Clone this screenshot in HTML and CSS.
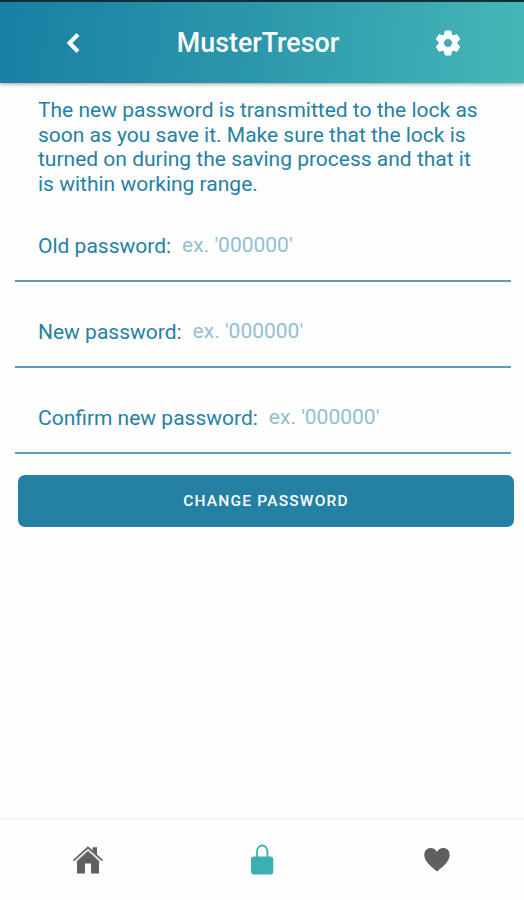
FILE: index.html
```html
<!DOCTYPE html>
<html lang="en">
  <head>
    <meta charset="UTF-8" />
    <meta name="viewport" content="width=device-width, initial-scale=1.0" />
    <title>MusterTresor</title>
    <link rel="stylesheet" href="styles.css">
  </head>
  <body>
    <header class="header">
      <button type="button" class="icon-button" aria-label="Back">
        <svg width="30" height="30" viewBox="0 0 30 30">
          <path d="M20 6.500 L11.500 15 L20 23.500" fill="none" stroke="#fff" stroke-width="4" />
        </svg>
      </button>
      <h1>MusterTresor</h1>
      <button type="button" class="icon-button" aria-label="Settings">
        <svg width="30" height="30" viewBox="0 0 24 24">
          <path fill="#fff" stroke="#fff" stroke-width=".8" stroke-linejoin="round" d="M19.14 12.94c.04-.3.06-.61.06-.94 0-.32-.02-.64-.07-.94l2.03-1.58c.18-.14.23-.41.12-.61l-1.92-3.32c-.12-.22-.37-.29-.59-.22l-2.39.96c-.5-.38-1.03-.7-1.62-.94l-.36-2.54c-.04-.24-.24-.41-.48-.41h-3.84c-.24 0-.43.17-.47.41l-.36 2.54c-.59.24-1.13.57-1.62.94l-2.39-.96c-.22-.08-.47 0-.59.22L2.74 8.87c-.12.21-.08.47.12.61l2.03 1.58c-.05.3-.09.63-.09.94s.02.64.07.94l-2.03 1.58c-.18.14-.23.41-.12.61l1.92 3.32c.12.22.37.29.59.22l2.39-.96c.5.38 1.03.7 1.62.94l.36 2.54c.05.24.24.41.48.41h3.84c.24 0 .44-.17.47-.41l.36-2.54c.59-.24 1.13-.56 1.62-.94l2.39.96c.22.08.47 0 .59-.22l1.92-3.32c.12-.22.07-.47-.12-.61l-2.01-1.58zM12 15.600a3.600 3.600 0 1 1 0-7.200 3.600 3.600 0 0 1 0 7.200z" />
        </svg>
      </button>
    </header>

    <main class="content">
      <p class="info">
        The new password is transmitted to the lock as<br />
        soon as you save it. Make sure that the lock is<br />
        turned on during the saving process and that it<br />
        is within working range.
      </p>
      <form id="password-form">
        <div class="field">
          <label for="oldPassword">Old password:</label>
          <input type="text" id="oldPassword" name="oldPassword" placeholder="ex. '000000'" />
        </div>
        <div class="field">
          <label for="newPassword">New password:</label>
          <input type="text" id="newPassword" name="newPassword" placeholder="ex. '000000'" />
        </div>
        <div class="field">
          <label for="confirmPassword">Confirm new password:</label>
          <input type="text" id="confirmPassword" name="confirmPassword" placeholder="ex. '000000'" />
        </div>
        <button type="submit">CHANGE PASSWORD</button>
      </form>
    </main>

    <nav class="tabs">
      <a href="#" aria-label="Home">
        <svg width="32" height="32" viewBox="0 0 32 32">
          <path fill="#606060" d="M20.500 3.500h4.500v9l-4.500-4z" />
          <path fill="#606060" d="M5 16.500 L16 6.500 L27 16.500 V29.500 H19 V19.500 H13 V29.500 H5z" />
          <path d="M3 16.800 L16 4.800 L29 16.800" fill="none" stroke="#ddd" stroke-width="3.400" />
          <path d="M1.500 16.500 L16 3.400 L30.500 16.500" fill="none" stroke="#606060" stroke-width="1.600" />
          <path fill="#606060" d="M21 3.500h4v7l-4-3.700z" />
        </svg>
      </a>
      <a href="#" aria-label="Lock">
        <svg width="32" height="32" viewBox="0 0 32 32">
          <path d="M11 14 V7.500 a5.200 6 0 0 1 10.400 0 V14" fill="none" stroke="#3cb0b0" stroke-width="1.800" />
          <rect x="5" y="12.500" width="22.300" height="18" rx="3" fill="#3cb0b0" />
        </svg>
      </a>
      <a href="#" aria-label="Favorites">
        <svg width="32" height="32" viewBox="0 0 32 32">
          <path fill="#5f5f5f" d="M16 27.500 C13 24.500 3.300 18.500 3.300 11 C3.300 6.500 6.200 4 9.700 4 C12.500 4 14.800 5.500 16 8 C17.200 5.500 19.500 4 22.300 4 C25.800 4 28.700 6.500 28.700 11 C28.700 18.500 19 24.500 16 27.500z" />
        </svg>
      </a>
    </nav>
  </body>
</html>
```
FILE: styles.css
```css
* {
  box-sizing: border-box;
}

body {
  display: flex;
  flex-direction: column;
  height: 100vh;
  margin: 0;
  font-family: Roboto, sans-serif;
  background-color: #fefefe;
  color: #2581a3;
}

.header {
  display: flex;
  justify-content: space-between;
  align-items: center;
  height: 83px;
  padding: 0 61px 0 58px;
  border-top: 2px solid #132e38;
  background: linear-gradient(95deg, #197fa4, #2c98ab 50%, #46b7b8);
  background-origin: border-box;
  box-shadow: 0 1px 4px rgba(0, 0, 0, 0.4);
  color: white;
}

h1 {
  margin: 0 5px 0 0;
  font-size: 26.8px;
  font-weight: 500;
}

.icon-button {
  display: flex;
  padding: 0;
  border: none;
  background: none;
}

.content {
  flex: 1;
}

.info {
  margin: 15px 38px 22px;
  font-size: 21px;
  line-height: 24.5px;
  white-space: nowrap;
}

.field {
  display: flex;
  align-items: center;
  height: 64px;
  margin: 0 13px 22px 15px;
  padding: 0 23px 6px;
  border-bottom: 2px solid #6299b8;
  font-size: 21px;
}

.field input {
  flex: 1;
  min-width: 0;
  padding: 0 0 2px;
  margin-left: 11px;
  border: none;
  outline: none;
  background: none;
  font: inherit;
  color: inherit;
}

.field input::placeholder {
  color: #92bfd1;
  opacity: 1;
}

button[type="submit"] {
  display: block;
  width: 496px;
  height: 52px;
  margin-left: 18px;
  border: none;
  border-radius: 7px;
  background-color: #2581a3;
  color: white;
  font-family: inherit;
  font-size: 15.5px;
  font-weight: 500;
  letter-spacing: 1.2px;
}

.field:nth-of-type(3) {
  margin-bottom: 21px;
}

.tabs {
  display: flex;
  height: 83px;
  padding-left: 1px;
  border-top: 3px solid #f5f5f5;
}

.tabs a {
  flex: 1;
  display: flex;
  justify-content: center;
  align-items: center;
}
```
